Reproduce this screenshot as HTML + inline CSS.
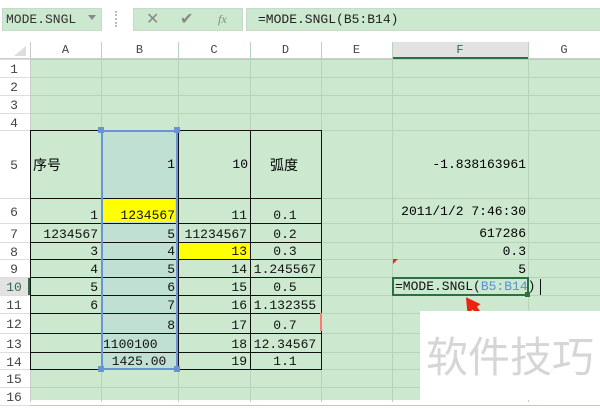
<!DOCTYPE html>
<html><head><meta charset="utf-8"><style>
body{margin:0;width:600px;height:400px;overflow:hidden;background:#fff;position:relative;font-family:"Liberation Mono","Noto Sans CJK SC",monospace;}
.a{position:absolute;box-sizing:border-box;}
.t{position:absolute;font-size:13px;color:#111;white-space:nowrap;line-height:16px;}
</style></head><body>
<div id="root"></div>
<script>
const R=document.body;
function d(x,y,w,h,st,txt){const e=document.createElement('div');e.className='a';e.style.cssText=`left:${x}px;top:${y}px;width:${w}px;height:${h}px;`+(st||'');if(txt!==undefined)e.innerHTML=txt;R.appendChild(e);return e;}
// toolbar
d(2,8,100,23,'background:#cce8cf;border:1px solid #c8d8ca;');
d(6,8,80,23,'font-size:13px;line-height:23px;color:#333;','MODE.SNGL');
d(88,15,0,0,'border-left:4px solid transparent;border-right:4px solid transparent;border-top:5px solid #888;');
d(115,11,3,16,'border-left:2px dotted #bbb;');
d(133,8,110,23,'background:#cce8cf;border:1px solid #c8d8ca;');
d(146,8,16,23,'font-size:16px;line-height:22px;color:#888;font-family:\"DejaVu Sans\";','✕');
d(180,8,16,23,'font-size:16px;line-height:22px;color:#888;font-family:\"DejaVu Sans\";','✔');
d(218,8,16,23,'font-size:12px;line-height:22px;color:#888;font-style:italic;font-family:\"Liberation Serif\";','fx');
d(246,8,360,23,'background:#cce8cf;border:1px solid #c8d8ca;');
d(258,8,300,23,'font-size:13px;line-height:23px;color:#222;','=MODE.SNGL(B5:B14)');
// grid
const cx=[0,30,101,178,250,321,392,528,600];
const ry=[42,59,77,95,113,130,198,223,242,259,277,295,313,333,352,369,387,405];
d(30,59,570,341,'background:#cce8cf;');
d(0,42,600,17,'background:#fff;border-bottom:1px solid #ccc;');
d(392,42,136,17,'background:#e2e2e2;border-bottom:2px solid #2e6e45;');
d(0,277,30,18,'background:#e2e2e2;border-right:2px solid #2e6e45;');
// selection fill
d(101,130,77,239,'background:#bfe0d2;');
d(103,199,72,23,'background:#ffff00;');
d(179,243,70,16,'background:#ffff00;');
// grid lines
for(let i=1;i<cx.length-1;i++)d(cx[i],42,1,360,'background:'+(i==1?'#ccc':'#b8d3bb')+';');
for(let j=1;j<ry.length;j++){d(0,ry[j],30,1,'background:#ddd;');d(30,ry[j],570,1,'background:#b8d3bb;');}
// headers
const cols=['A','B','C','D','E','F','G'];
for(let i=0;i<7;i++)d(cx[i+1],42,cx[i+2]-cx[i+1],17,'text-align:center;font-size:12px;line-height:17px;color:'+(i==5?'#2e6e45':'#444')+';',cols[i]);
for(let j=1;j<=16;j++)d(0,ry[j],28,ry[j+1]-ry[j],'text-align:center;font-size:13px;line-height:'+(ry[j+1]-ry[j]+4)+'px;color:'+(j==10?'#2e6e45':'#444')+';',j);
d(0,42,0,0,'border-left:12px solid transparent;border-bottom:10px solid #ddd;left:14px;top:46px;');
// table borders
for(let j=5;j<=15;j++)d(30,ry[j],291,1,'background:#111;');
for(const x of [30,101,178,250,321])d(x,130,1,240,'background:#111;');
// cell text
function cell(c,r,txt,al,extra){const x0=cx[c+1],x1=cx[c+2],y0=ry[r],y1=ry[r+1];
 d(x0+2,y0,x1-x0-5,y1-y0,`text-align:${al||'right'};font-size:13px;line-height:${(y1-y0)*2-14}px;color:#111;`+(extra||''),txt);}
const data=[
[6,'1','1234567','11','0.1'],[7,'1234567','5','11234567','0.2'],[8,'3','4','13','0.3'],[9,'4','5','14','1.245567'],
[10,'5','6','15','0.5'],[11,'6','7','16','1.132355'],[12,'','8','17','0.7'],[13,'','1100100','18','12.34567'],[14,'','1425.00','19','1.1']];
for(const r of data){cell(0,r[0],r[1]);cell(1,r[0],r[2],r[0]==13?'left':r[0]==14?'center':'right');cell(2,r[0],r[3]);cell(3,r[0],r[4],'center');}
d(33,155,60,20,'font-size:14px;','序号');
d(101,157,74,20,'text-align:right;font-size:13px;','1');
d(178,157,70,20,'text-align:right;font-size:13px;','10');
d(270,155,40,20,'font-size:14px;','弧度');
d(392,157,134,20,'text-align:right;font-size:13px;','-1.838163961');
d(392,204,134,20,'text-align:right;font-size:13px;','2011/1/2 7:46:30');
d(392,226,134,18,'text-align:right;font-size:13px;','617286');
d(392,244,134,18,'text-align:right;font-size:13px;','0.3');
d(392,262,134,18,'text-align:right;font-size:13px;','5');
d(393,259,0,0,'border-top:5px solid #e22;border-right:5px solid transparent;');
// selection border
d(101,130,77,240,'border:2px solid #6a93d6;');
for(const [x,y] of [[98,127],[174,127],[98,366],[174,366]])d(x,y,6,6,'background:#6a93d6;');
// editing cell
d(392,277,137,19,'border:2px solid #2e6e45;background:#cce8cf;');
d(525,292,5,5,'background:#2e6e45;');
d(395,277,150,19,'font-size:13px;line-height:19px;color:#111;','=MODE.SNGL(<span style="color:#5b8fd9">B5:B14</span>)');
d(540,279,1,16,'background:#111;');
d(320,313,2,18,'background:#f77;');
// arrow
d(462,296,0,0,'border-left:8px solid transparent;border-right:8px solid transparent;border-bottom:14px solid #e21;transform:rotate(-35deg);');
d(473,305,5,8,'background:#e21;transform:rotate(-35deg);');
// watermark
d(420,311,180,89,'background:#fff;');
d(420,325,180,60,'font-family:\"Noto Sans CJK SC\",sans-serif;font-size:42px;line-height:60px;color:#d6d6d6;text-align:center;','软件技巧');
</script>
</body></html>
